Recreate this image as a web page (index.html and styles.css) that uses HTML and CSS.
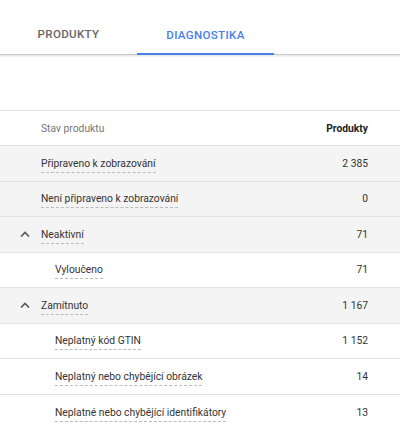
FILE: index.html
```html
<!DOCTYPE html>
<html lang="cs">
<head>
    <meta charset="UTF-8">
    <meta name="viewport" content="width=device-width, initial-scale=1.0">
    <title>Diagnostika</title>
    <link rel="stylesheet" href="styles.css">
</head>
<body>
    <nav class="tabs">
        <div class="tab">PRODUKTY</div>
        <div class="tab active">DIAGNOSTIKA</div>
    </nav>

    <table class="status-table">
        <thead>
            <tr>
                <th class="label-col">Stav produktu</th>
                <th class="count-col">Produkty</th>
            </tr>
        </thead>
        <tbody>
            <tr class="shaded">
                <td class="label-col"><span class="label">Připraveno k zobrazování</span></td>
                <td class="count-col">2 385</td>
            </tr>
            <tr class="shaded">
                <td class="label-col"><span class="label">Není připraveno k zobrazování</span></td>
                <td class="count-col">0</td>
            </tr>
            <tr class="shaded">
                <td class="label-col">
                    <svg class="chevron" width="10" height="6" viewBox="0 0 10 6"><path d="M1 5.5 L5 1.5 L9 5.5" fill="none" stroke="#555" stroke-width="1.6"/></svg><span class="label">Neaktivní</span>
                </td>
                <td class="count-col">71</td>
            </tr>
            <tr>
                <td class="label-col sub"><span class="label">Vyloučeno</span></td>
                <td class="count-col">71</td>
            </tr>
            <tr class="shaded">
                <td class="label-col">
                    <svg class="chevron" width="10" height="6" viewBox="0 0 10 6"><path d="M1 5.5 L5 1.5 L9 5.5" fill="none" stroke="#555" stroke-width="1.6"/></svg><span class="label">Zamítnuto</span>
                </td>
                <td class="count-col">1 167</td>
            </tr>
            <tr>
                <td class="label-col sub"><span class="label">Neplatný kód GTIN</span></td>
                <td class="count-col">1 152</td>
            </tr>
            <tr>
                <td class="label-col sub"><span class="label">Neplatný nebo chybějící obrázek</span></td>
                <td class="count-col">14</td>
            </tr>
            <tr>
                <td class="label-col sub"><span class="label">Neplatné nebo chybějící identifikátory</span></td>
                <td class="count-col">13</td>
            </tr>
        </tbody>
    </table>
</body>
</html>
```

FILE: styles.css
```css
body {
    margin: 0;
    background: #fff;
    font-family: Roboto, 'Noto Sans', sans-serif;
    color: #333;
    overflow: hidden;
}

.tabs {
    display: flex;
    height: 54px;
    border-bottom: 1px solid #c8c8c8;
    box-shadow: 0 1px 2px rgba(0,0,0,0.12);
}

.tab {
    width: 137px;
    display: flex;
    align-items: flex-end;
    justify-content: center;
    font-size: 11.6px;
    font-weight: 500;
    letter-spacing: 0.3px;
    color: #666;
    box-sizing: border-box;
    padding-bottom: 13px;
}

.tab.active {
    color: #4a7fe8;
    border-bottom: 2px solid #4a7fe8;
    margin-bottom: -1px;
    padding-bottom: 11px;
}

.status-table {
    width: 100%;
    margin-top: 55px;
    border-collapse: collapse;
    font-size: 10.3px;
}

.status-table tr {
    height: 35px;
    border-top: 1px solid #e2e2e2;
}

.status-table tbody tr {
    height: 35.5px;
}

.status-table tr.shaded {
    background: #f4f4f4;
}

.status-table th {
    font-weight: normal;
    text-align: left;
}

.label-col {
    padding: 0 0 0 41px;
    color: #333;
}

.status-table th.label-col {
    color: #777;
}

.label-col.sub {
    padding-left: 55px;
}

.count-col {
    text-align: right;
    padding-right: 32px;
    color: #333;
}

.status-table th.count-col {
    font-weight: bold;
    color: #222;
    text-align: right;
}

.label {
    border-bottom: 1px dashed #bbb;
    padding-bottom: 2px;
}

.chevron {
    margin-left: -21px;
    margin-right: 11px;
    vertical-align: 1px;
}
```
